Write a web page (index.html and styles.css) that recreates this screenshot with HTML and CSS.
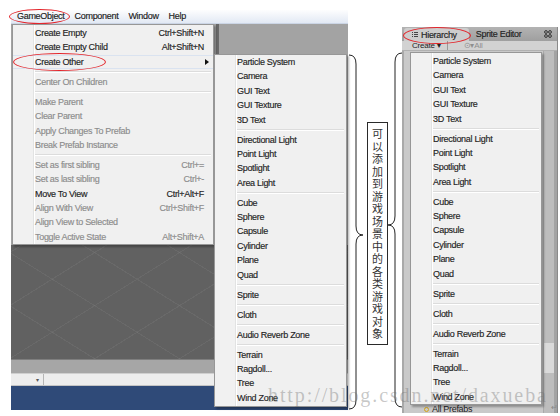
FILE: index.html
```html
<!DOCTYPE html>
<html>
<head>
<meta charset="utf-8">
<link rel="stylesheet" href="styles.css">
</head>
<body>
<div class="page">
  <div class="shot-left">
    <div class="menubar">
      <span class="mb-item mb-active">GameObject</span>
      <span class="mb-item">Component</span>
      <span class="mb-item">Window</span>
      <span class="mb-item">Help</span>
    </div>
    <div class="upper"></div>
    <div class="scene"></div>
    <div class="bar1"></div>
    <div class="toolbar"><div class="dd"><span class="dd-arrow">▾</span></div></div>
    <div class="taskbar"></div>

    <div class="menu main-menu">
      <div class="mi"><span>Create Empty</span><span>Ctrl+Shift+N</span></div>
      <div class="mi"><span>Create Empty Child</span><span>Alt+Shift+N</span></div>
      <div class="mi hl"><span>Create Other</span><span class="arr"></span></div>
      <div class="sep"></div>
      <div class="mi dis"><span>Center On Children</span></div>
      <div class="sep"></div>
      <div class="mi dis"><span>Make Parent</span></div>
      <div class="mi dis"><span>Clear Parent</span></div>
      <div class="mi dis"><span>Apply Changes To Prefab</span></div>
      <div class="mi dis"><span>Break Prefab Instance</span></div>
      <div class="sep"></div>
      <div class="mi dis"><span>Set as first sibling</span><span>Ctrl+=</span></div>
      <div class="mi dis"><span>Set as last sibling</span><span>Ctrl+-</span></div>
      <div class="mi"><span>Move To View</span><span>Ctrl+Alt+F</span></div>
      <div class="mi dis"><span>Align With View</span><span>Ctrl+Shift+F</span></div>
      <div class="mi dis"><span>Align View to Selected</span></div>
      <div class="mi dis"><span>Toggle Active State</span><span>Alt+Shift+A</span></div>
    </div>

    <div class="menu objmenu sub-menu">
      <div class="mi"><span>Particle System</span></div>
      <div class="mi"><span>Camera</span></div>
      <div class="mi"><span>GUI Text</span></div>
      <div class="mi"><span>GUI Texture</span></div>
      <div class="mi"><span>3D Text</span></div>
      <div class="sep"></div>
      <div class="mi"><span>Directional Light</span></div>
      <div class="mi"><span>Point Light</span></div>
      <div class="mi"><span>Spotlight</span></div>
      <div class="mi"><span>Area Light</span></div>
      <div class="sep"></div>
      <div class="mi"><span>Cube</span></div>
      <div class="mi"><span>Sphere</span></div>
      <div class="mi"><span>Capsule</span></div>
      <div class="mi"><span>Cylinder</span></div>
      <div class="mi"><span>Plane</span></div>
      <div class="mi"><span>Quad</span></div>
      <div class="sep"></div>
      <div class="mi"><span>Sprite</span></div>
      <div class="sep"></div>
      <div class="mi"><span>Cloth</span></div>
      <div class="sep"></div>
      <div class="mi"><span>Audio Reverb Zone</span></div>
      <div class="sep"></div>
      <div class="mi"><span>Terrain</span></div>
      <div class="mi"><span>Ragdoll...</span></div>
      <div class="mi"><span>Tree</span></div>
      <div class="mi"><span>Wind Zone</span></div>
    </div>
  </div>

  <div class="annot">
    <svg class="brace-l" viewBox="0 0 14 356" width="14" height="356"><path d="M0 1 Q7 1 7 10 L7 172 Q7 181 14 181 Q7 181 7 190 L7 346 Q7 355 0 355" fill="none" stroke="#222" stroke-width="1"/></svg>
    <div class="note">可以添加到游戏场景中的各类游戏对象</div>
    <svg class="brace-r" viewBox="0 0 14 356" width="14" height="356"><path d="M14 1 Q7 1 7 10 L7 164 Q7 173 0 173 Q7 173 7 182 L7 346 Q7 355 14 355" fill="none" stroke="#222" stroke-width="1"/></svg>
  </div>

  <div class="panel">
    <div class="tabs">
      <div class="tab">
        <svg class="tab-ico" viewBox="0 0 6 6" width="6" height="6"><path d="M0 0.5h1M2 0.5h4M0 2.5h1M2 2.5h4M0 4.5h1M2 4.5h4" stroke="#444" stroke-width="1"/></svg>
        <span>Hierarchy</span>
      </div>
      <span class="tab2">Sprite Editor</span>
      <svg class="tab-menu" viewBox="0 0 8 8" width="8" height="8"><circle cx="2" cy="2" r="1.4" fill="none" stroke="#333"/><circle cx="6" cy="2" r="1.4" fill="none" stroke="#333"/><circle cx="2" cy="6" r="1.4" fill="none" stroke="#333"/><circle cx="6" cy="6" r="1.4" fill="none" stroke="#333"/></svg>
    </div>
    <div class="ptool">
      <span class="create">Create ▾</span>
      <span class="search">⊙▾All</span>
    </div>
    <div class="pbody">
      <div class="plist">
        <div class="prefabs"><span class="pico"></span>All Prefabs</div>
      </div>
      <div class="pscroll"><div class="thumb"></div></div>
    </div>

    <div class="menu objmenu right-menu">
      <div class="mi"><span>Particle System</span></div>
      <div class="mi"><span>Camera</span></div>
      <div class="mi"><span>GUI Text</span></div>
      <div class="mi"><span>GUI Texture</span></div>
      <div class="mi"><span>3D Text</span></div>
      <div class="sep"></div>
      <div class="mi"><span>Directional Light</span></div>
      <div class="mi"><span>Point Light</span></div>
      <div class="mi"><span>Spotlight</span></div>
      <div class="mi"><span>Area Light</span></div>
      <div class="sep"></div>
      <div class="mi"><span>Cube</span></div>
      <div class="mi"><span>Sphere</span></div>
      <div class="mi"><span>Capsule</span></div>
      <div class="mi"><span>Cylinder</span></div>
      <div class="mi"><span>Plane</span></div>
      <div class="mi"><span>Quad</span></div>
      <div class="sep"></div>
      <div class="mi"><span>Sprite</span></div>
      <div class="sep"></div>
      <div class="mi"><span>Cloth</span></div>
      <div class="sep"></div>
      <div class="mi"><span>Audio Reverb Zone</span></div>
      <div class="sep"></div>
      <div class="mi"><span>Terrain</span></div>
      <div class="mi"><span>Ragdoll...</span></div>
      <div class="mi"><span>Tree</span></div>
      <div class="mi"><span>Wind Zone</span></div>
    </div>
  </div>

  <div class="watermark">http://blog.csdn.net/daxueba</div>
  <div class="para">↵</div>
</div>
</body>
</html>
```

FILE: styles.css
```css
* { box-sizing: border-box; margin: 0; padding: 0; }
html, body { background: #fff; }
body { margin: 0; font-family: "Liberation Sans", Arial, sans-serif; }

.page {
  position: relative;
  width: 560px;
  height: 416px;
  display: flex;
  align-items: flex-start;
  overflow: hidden;
}

/* ---------- left screenshot ---------- */
.shot-left {
  position: relative;
  margin: 10px 0 0 11px;
  width: 337px;
  height: 400px;
  display: flex;
  flex-direction: column;
  flex: none;
}
.menubar {
  height: 14px;
  display: flex;
  align-items: center;
  padding-left: 1px;
  background: linear-gradient(#fdfdfe, #e2e9f4);
  border-bottom: 1px solid #cbd5e5;
  font-size: 9px;
  letter-spacing: -0.3px;
  color: #1a1a1a;
  -webkit-text-stroke: 0.15px #1a1a1a;
}
.mb-item { position: relative; padding: 0 5px; line-height: 13px; }
.mb-active::after {
  content: "";
  position: absolute;
  left: -3px; right: 0; top: -1px; bottom: -1px;
  border: 1px solid #e3262c;
  border-radius: 50%;
}
.upper {
  height: 221px;
  background: linear-gradient(to right, #a3a3a3 0 205px, #6a6a6a 205px 208px, #a3a3a3 208px);
}
.scene {
  height: 114px;
  background:
    repeating-linear-gradient(32deg, transparent 0 44px, rgba(255,255,255,0.05) 44px 45px),
    repeating-linear-gradient(-32deg, transparent 0 44px, rgba(255,255,255,0.05) 44px 45px),
    #616161;
}
.bar1 { height: 14px; background: #a6a6a6; border-top: 1px solid #7e7e7e; }
.toolbar {
  height: 13px;
  background: #ededed;
  border-top: 1px solid #cfcfcf;
  border-bottom: 1px solid #c4c4c4;
  display: flex;
}
.dd {
  width: 33px;
  border-right: 1px solid #b5b5b5;
  display: flex;
  justify-content: flex-end;
  align-items: center;
  padding-right: 4px;
}
.dd-arrow { font-size: 6px; color: #555; }
.taskbar { height: 24px; background: #2f4a78; }

/* ---------- menus ---------- */
.menu {
  position: absolute;
  background: linear-gradient(to right, #f1f1f1 0 20px, #e2e3e3 20px 21px, #fff 21px 22px, #f0f0f0 22px);
  border: 1px solid #979797;
  box-shadow: 2px 2px 2px rgba(0, 0, 0, 0.3);
  font-size: 9px;
  letter-spacing: -0.3px;
  color: #1e1e1e;
  -webkit-text-stroke: 0.15px #1e1e1e;
}
.mi {
  position: relative;
  height: 14.4px;
  line-height: 14.4px;
  display: flex;
  justify-content: space-between;
  align-items: center;
  padding: 0 9px 0 22px;
  white-space: nowrap;
}
.mi.dis { color: #8c8c8c; -webkit-text-stroke: 0.15px #8c8c8c; }
.mi.hl { box-shadow: inset 0 1px #dae3f0, inset 0 -1px #dae3f0; }
.mi.hl::after {
  content: "";
  position: absolute;
  left: 0; top: -1.5px;
  width: 91px; height: 16px;
  border: 1px solid #e3262c;
  border-radius: 50%;
}
.arr {
  width: 0; height: 0;
  border-left: 4px solid #111;
  border-top: 3.5px solid transparent;
  border-bottom: 3.5px solid transparent;
  margin-right: -5px;
}
.sep {
  height: 0;
  margin: 1.8px 2px 1.8px 22px;
  border-top: 1px solid #dcdcdc;
  border-bottom: 1px solid #fff;
}
.main-menu { left: 1px; top: 14px; width: 202px; padding-top: 1px; }
.sub-menu { left: 203px; top: 44px; width: 133px; padding-bottom: 1px; }
.right-menu { left: 8px; top: 25px; width: 132px; padding-top: 1px; }

/* ---------- annotation ---------- */
.annot {
  display: flex;
  align-items: flex-start;
  width: 54px;
  height: 416px;
  flex: none;
}
.brace-l { flex: none; margin: 54px 0 0 1px; }
.brace-r { flex: none; margin-top: 52px; }
.note {
  flex: none;
  margin: 122px 0 0 4px;
  width: 21px;
  height: 223px;
  border: 1px solid #2a2a2a;
  padding-top: 4px;
  font-family: "Noto Sans CJK SC", "Noto Sans CJK JP", sans-serif;
  font-size: 11px;
  line-height: 12.5px;
  text-align: center;
  color: #333;
  background: #fff;
}

/* ---------- right panel ---------- */
.panel {
  position: relative;
  flex: none;
  margin-top: 27px;
  width: 156px;
  height: 386px;
  display: flex;
  flex-direction: column;
  border-right: 1px solid #8a8a8a;
}
.tabs {
  height: 14px;
  display: flex;
  align-items: flex-end;
  background: linear-gradient(#b3b3b3, #9f9f9f);
  font-size: 9px;
  letter-spacing: -0.3px;
  color: #1e1e1e;
  -webkit-text-stroke: 0.15px #1e1e1e;
  padding-left: 2px;
}
.tab {
  position: relative;
  height: 13px;
  display: flex;
  align-items: center;
  gap: 3px;
  padding: 0 12px 0 8px;
  background: #cdcdcd;
  border-radius: 3px 3px 0 0;
}
.tab::after {
  content: "";
  position: absolute;
  left: -1px; right: -2px; top: -1px; bottom: -3px;
  border: 1px solid #e3262c;
  border-radius: 50%;
}
.tab-ico { flex: none; }
.tab2 { margin-left: 7px; line-height: 13px; color: #222; }
.tab-menu { margin-left: auto; margin-right: 5px; align-self: center; }
.ptool {
  height: 10px;
  display: flex;
  align-items: center;
  background: #d2d2d2;
  border-bottom: 1px solid #b0b0b0;
  font-size: 8px;
  letter-spacing: -0.2px;
  color: #222;
  padding-left: 10px;
}
.create { padding-right: 6px; border-right: 1px solid #9a9a9a; line-height: 9px; }
.search { margin-left: 16px; color: #8f8f8f; }
.pbody {
  flex: 1;
  display: flex;
  background: #c9c9c9;
  box-shadow: inset 2px 0 #a9a9a9;
}
.plist {
  flex: 1;
  display: flex;
  flex-direction: column;
  justify-content: flex-end;
}
.prefabs {
  display: flex;
  align-items: center;
  gap: 3px;
  padding-left: 22px;
  height: 8px;
  font-size: 9px;
  letter-spacing: -0.3px;
  color: #222;
  overflow: hidden;
  line-height: 8px;
}
.pico { width: 5px; height: 5px; border-radius: 50%; border: 1.5px solid #d6a416; }
.pscroll {
  width: 14px;
  background: #bdbdbd;
  border-left: 1px solid #aaaaaa;
  border-right: 3px solid #a3a3a3;
}
.thumb { margin-top: 292px; height: 30px; background: #dadada; }

/* ---------- overlays ---------- */
.watermark {
  position: absolute;
  left: 268px;
  top: 384px;
  font-family: "Liberation Serif", serif;
  font-size: 20px;
  letter-spacing: 1.9px;
  color: rgba(110, 110, 110, 0.38);
  white-space: nowrap;
  pointer-events: none;
}
.para {
  position: absolute;
  left: 551px;
  top: 403px;
  font-size: 8px;
  color: #888;
}
```
